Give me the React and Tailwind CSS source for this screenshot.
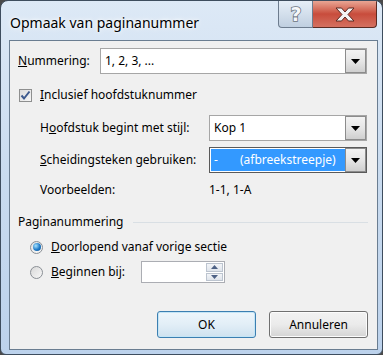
import React from "react";

function Arrow() {
  return (
    <svg width="9" height="5" viewBox="0 0 9 5">
      <path d="M0 0 H9 L4.5 5 Z" fill="#000" />
    </svg>
  );
}

function Combo({ width, children, focused }) {
  return (
    <div
      className={`h-[26px] flex items-stretch bg-white border ${
        focused ? "border-[#5a5a5a]" : "border-[#a6a6a6]"
      }`}
      style={{ width }}
    >
      <div className="flex-1 flex items-center min-w-0">{children}</div>
      <div className="w-[21px] flex items-center justify-center border border-[#8c8c8c] bg-gradient-to-b from-[#f3f3f3] via-[#e6e6e6] to-[#cfcfcf]">
        <Arrow />
      </div>
    </div>
  );
}

export default function App() {
  return (
    <div className="w-[383px] h-[355px] bg-[#4a4a4a] font-['Noto_Sans',sans-serif] text-[12px] text-black">
      <div className="w-[383px] h-[355px] rounded-t-[8px] rounded-b-[6px] border border-[#3e4d5e] bg-gradient-to-b from-[#dde9f6] via-[#c9dbef] to-[#bcd2ec] flex flex-col overflow-hidden">
        {/* title bar */}
        <div className="h-[39px] flex items-start">
          <div className="pl-[9px] pt-[12px] text-[14px] leading-[20px] text-black [text-shadow:0_0_6px_#ffffff,0_0_3px_#ffffff]">
            Opmaak van paginanummer
          </div>
          <div className="ml-auto mr-[5px] flex h-[27px]">
            <div className="w-[35px] h-[27px] rounded-bl-[4px] border border-t-0 border-[#6d7c8e] bg-gradient-to-b from-[#e6eef7] via-[#d3dfec] to-[#c0cfe0] flex items-center justify-center">
              <svg width="20" height="22" viewBox="0 0 20 22">
                <text
                  x="10"
                  y="18"
                  textAnchor="middle"
                  fontFamily="DejaVu Sans, sans-serif"
                  fontWeight="bold"
                  fontSize="19"
                  fill="#f5f7f9"
                  stroke="#6a7480"
                  strokeWidth="1.6"
                  paintOrder="stroke fill"
                >
                  ?
                </text>
              </svg>
            </div>
            <div className="w-[64px] h-[27px] rounded-br-[4px] border border-l-0 border-t-0 border-[#5a2a22] bg-gradient-to-b from-[#e8a594] via-[#c84c3c] to-[#d47060] flex items-center justify-center">
              <svg width="24" height="17" viewBox="0 0 24 17">
                <path
                  d="M3 2 L8.5 2 L12 6 L15.5 2 L21 2 L15 8.5 L21 15 L15.5 15 L12 11 L8.5 15 L3 15 L9 8.5 Z"
                  fill="#f4f4f4"
                  stroke="#5a2a22"
                  strokeWidth="1"
                  strokeLinejoin="round"
                />
              </svg>
            </div>
          </div>
        </div>
        {/* client */}
        <div className="ml-[8px] w-[369px] h-[310px] border border-[#6a7d91] bg-[#f0f0f0] flex flex-col pl-[8px] pr-[9px]">
          <div className="mt-[7px] flex items-center">
            <div className="w-[82px]">
              <span className="underline">N</span>ummering:
            </div>
            <Combo width={267}>
              <span className="pl-[4px]">1, 2, 3, ...</span>
            </Combo>
          </div>
          <div className="mt-[11px] h-[20px] flex items-center">
            <div className="ml-[1px] w-[13px] h-[13px] border border-[#8e8f8f] bg-gradient-to-br from-[#dcdcdc] to-[#f6f6f6] flex items-center justify-center">
              <svg width="11" height="11" viewBox="0 0 11 11">
                <path
                  d="M1.5 5.5 L4 8.5 L9.5 1.5"
                  fill="none"
                  stroke="#3d5a8e"
                  strokeWidth="2"
                />
              </svg>
            </div>
            <div className="ml-[8px]">
              <span className="underline">I</span>nclusief hoofdstuknummer
            </div>
          </div>
          <div className="mt-[10px] flex items-center pl-[22px]">
            <div className="w-[169px]">
              H<span className="underline">o</span>ofdstuk begint met stijl:
            </div>
            <Combo width={158}>
              <span className="pl-[4px]">Kop 1</span>
            </Combo>
          </div>
          <div className="mt-[6px] flex items-center pl-[22px]">
            <div className="w-[169px]">
              <span className="underline">S</span>cheidingsteken gebruiken:
            </div>
            <Combo width={158} focused>
              <div className="ml-[1px] h-[22px] flex-1 bg-[#3399ff] text-white flex items-center">
                <span className="pl-[3px] w-[29px]">-</span>
                <span>(afbreekstreepje)</span>
              </div>
            </Combo>
          </div>
          <div className="mt-[7px] h-[20px] flex items-center pl-[22px]">
            <div className="w-[169px]">Voorbeelden:</div>
            <div>1-1, 1-A</div>
          </div>
          <div className="mt-[12px] h-[20px] flex items-center">
            <div>Paginanummering</div>
            <div className="ml-[9px] flex-1 h-px bg-[#d9dfe4]"></div>
          </div>
          <div className="mt-[5px] h-[20px] flex items-center pl-[12px]">
            <div className="w-[13px] h-[13px] rounded-full border border-[#8a8f95] bg-gradient-to-br from-[#e3e3e3] to-[#f8f8f8] flex items-center justify-center">
              <div className="w-[8px] h-[8px] rounded-full bg-[radial-gradient(circle_at_35%_35%,#a9e4ff,#1d79c7_55%,#0f4f8c)]"></div>
            </div>
            <div className="ml-[8px]">
              <span className="underline">D</span>oorlopend vanaf vorige sectie
            </div>
          </div>
          <div className="mt-[4px] h-[22px] flex items-center pl-[12px]">
            <div className="w-[13px] h-[13px] rounded-full border border-[#8a8f95] bg-gradient-to-br from-[#d8d8d8] to-[#f8f8f8]"></div>
            <div className="ml-[8px] w-[90px]">
              <span className="underline">B</span>eginnen bij:
            </div>
            <div className="w-[84px] h-[22px] border border-[#abadb3] bg-white flex justify-end">
              <div className="w-[19px] flex flex-col p-[1px] gap-px">
                <div className="flex-1 border border-[#bcc4cf] bg-gradient-to-b from-[#f3f5f8] to-[#dfe4eb] flex items-center justify-center">
                  <svg width="7" height="4" viewBox="0 0 7 4">
                    <path d="M0 4 L3.5 0 L7 4 Z" fill="#4d6185" />
                  </svg>
                </div>
                <div className="flex-1 border border-[#bcc4cf] bg-gradient-to-b from-[#f3f5f8] to-[#dfe4eb] flex items-center justify-center">
                  <svg width="7" height="4" viewBox="0 0 7 4">
                    <path d="M0 0 L7 0 L3.5 4 Z" fill="#4d6185" />
                  </svg>
                </div>
              </div>
            </div>
          </div>
          <div className="mt-[28px] flex justify-end gap-[13px]">
            <div className="w-[99px] h-[27px] rounded-[3px] border border-[#3c7fb1] bg-gradient-to-b from-[#eef6fb] via-[#e2eef7] to-[#cfe2ef] flex items-center justify-center shadow-[inset_0_0_0_1px_#c4e5f6]">
              OK
            </div>
            <div className="w-[99px] h-[27px] rounded-[3px] border border-[#707070] bg-gradient-to-b from-[#f2f2f2] via-[#ebebeb] to-[#d4d4d4] flex items-center justify-center shadow-[inset_0_0_0_1px_#fcfcfc]">
              Annuleren
            </div>
          </div>
        </div>
      </div>
    </div>
  );
}
